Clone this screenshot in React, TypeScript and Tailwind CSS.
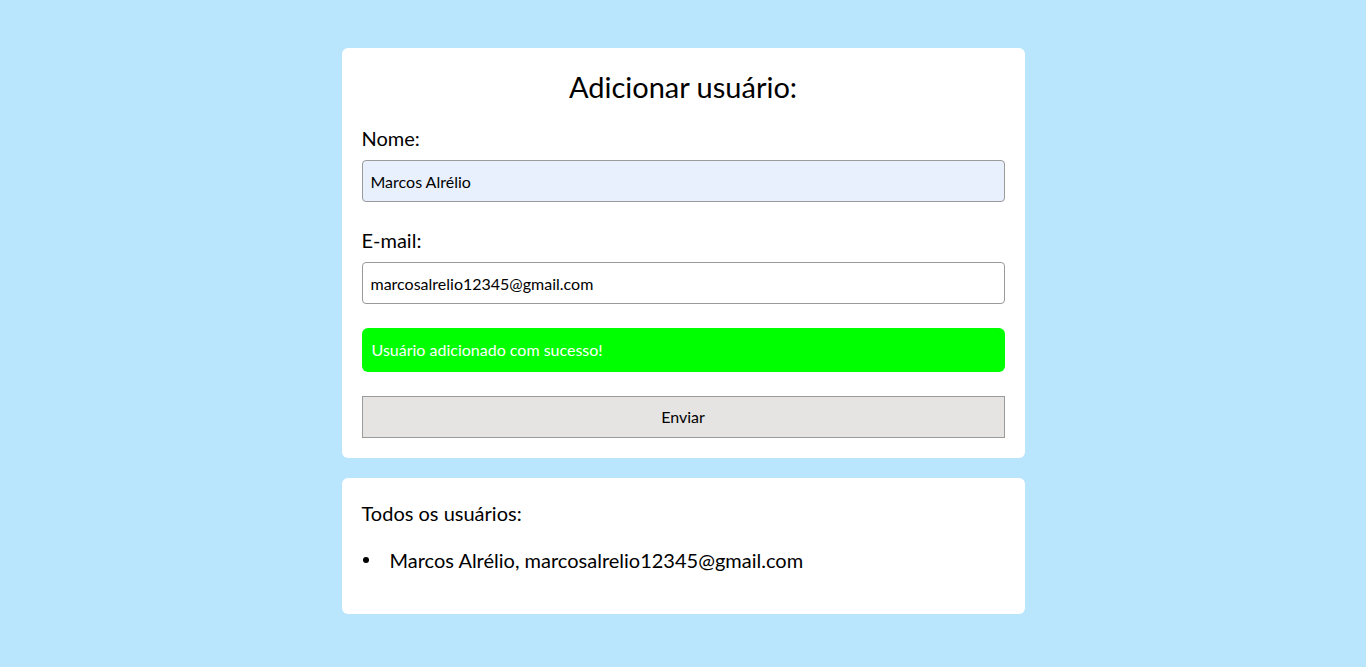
const users = [{ name: "Marcos Alrélio", email: "marcosalrelio12345@gmail.com" }];

export default function App() {
  return (
    <div className="min-h-screen bg-[#b9e6fc] pt-12 font-['Lato','Noto_Sans',sans-serif] text-black">
      <div className="mx-auto w-[683px]">
        <form className="rounded-md bg-white px-5 pt-[17px] pb-5" onSubmit={(e) => e.preventDefault()}>
          <h1 className="text-center text-[29px] leading-[44px]">Adicionar usuário:</h1>
          <label className="mt-[17px] block text-[20px] leading-6">Nome:</label>
          <input
            className="mt-[10px] block h-[42px] w-full rounded-[4px] border border-[#9a9a9a] bg-[#e8f0fe] px-2 text-[16px] outline-none"
            defaultValue="Marcos Alrélio"
          />
          <label className="mt-[26px] block text-[20px] leading-6">E-mail:</label>
          <input
            className="mt-[10px] block h-[42px] w-full rounded-[4px] border border-[#9a9a9a] bg-white px-2 text-[16px] outline-none"
            defaultValue="marcosalrelio12345@gmail.com"
          />
          <div className="mt-6 flex h-11 items-center rounded-md bg-[#00ff00] px-[10px] text-[16px] text-white">
            Usuário adicionado com sucesso!
          </div>
          <button className="mt-6 block h-[42px] w-full border border-[#9a9a9a] bg-[#e5e4e2] text-[16px]">
            Enviar
          </button>
        </form>
        <div className="mt-5 rounded-md bg-white px-5 pt-[23px] pb-[42px]">
          <p className="text-[20px] leading-6">Todos os usuários:</p>
          <ul className="mt-[23px] text-[20px] leading-6">
            {users.map((u) => (
              <li key={u.email} className="flex items-center">
                <span className="ml-[1px] mr-[21px] h-[6px] w-[6px] rounded-full bg-black" />
                <span>
                  {u.name}, {u.email}
                </span>
              </li>
            ))}
          </ul>
        </div>
      </div>
    </div>
  );
}
